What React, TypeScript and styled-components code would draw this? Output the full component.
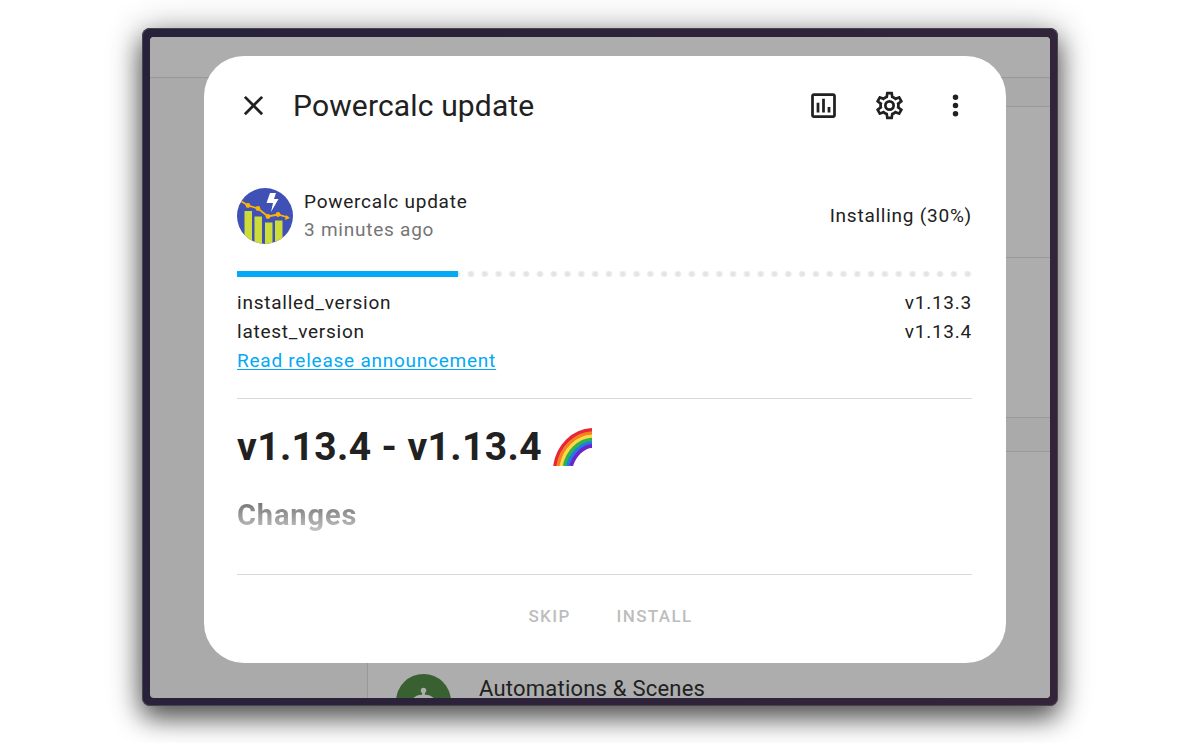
import React from "react";
import styled, { createGlobalStyle } from "styled-components";

const GlobalStyle = createGlobalStyle`
  * { box-sizing: border-box; }
  body { margin: 0; background: #fff; color: #212121; font-family: Roboto, "Liberation Sans", sans-serif; }
  h1, h2, h3, p, dl, dd { margin: 0; }
`;

const Page = styled.main`
  min-height: 100vh;
  padding: 28px 16px 37px;
  overflow: hidden;
`;

const Tablet = styled.div`
  position: relative;
  max-width: 916px;
  margin: 0 auto;
  padding: 9px 8px 8px;
  border-radius: 8px;
  background: linear-gradient(100deg, #27213a, #33243a);
  box-shadow: inset 0 0 0 1px #4a4450, 0 2px 36px rgba(0, 0, 0, 0.3), 0 12px 26px rgba(0, 0, 0, 0.6);
`;

const Screen = styled.div`
  position: relative;
  border-radius: 4px;
  overflow: hidden;
  padding: 19px 44px 35px 54px;
`;

const Backdrop = styled.div`
  position: absolute;
  inset: 0;
  background: #aaa;
`;

const Bar = styled.div`
  height: 41px;
  border-bottom: 1px solid #979797;
  background: #adadad;
`;

const Columns = styled.div`
  display: grid;
  grid-template-columns: 218px 1fr;
`;

const Sidebar = styled.div`
  border-right: 1px solid #999;
`;

const Cards = styled.div`
  display: flex;
  flex-direction: column;
  padding-top: 28px;
`;

const Card = styled.div<{ $height: number; $joined?: boolean }>`
  height: ${(p) => p.$height}px;
  margin-bottom: ${(p) => (p.$joined ? 0 : 33)}px;
  border-top: 1px solid #999;
  border-bottom: ${(p) => (p.$joined ? "0" : "1px solid #999")};
  background: #adadad;
`;

const CardRow = styled.div`
  display: flex;
  gap: 28px;
  padding: 222px 0 0 28px;
`;

const Badge = styled.span`
  display: flex;
  justify-content: center;
  width: 55px;
  height: 55px;
  padding-top: 11px;
  border-radius: 50%;
  background: #386030;
`;

const CardTitle = styled.span`
  padding-top: 6px;
  font-size: 22px;
  line-height: 18px;
  letter-spacing: 0.01em;
`;

const Dialog = styled.section`
  position: relative;
  border-radius: 40px;
  background: #fff;
`;

const Header = styled.header`
  display: flex;
  align-items: center;
  height: 99px;
  padding: 0 34px 0 33px;
`;

const Title = styled.h1`
  flex: 1;
  padding-left: 23px;
  font-size: 30px;
  line-height: 40px;
  font-weight: 400;
  letter-spacing: 0.005em;
`;

const IconButton = styled.button`
  display: flex;
  padding: 0;
  border: 0;
  background: none;
  color: inherit;
`;

const Actions = styled.div`
  display: flex;
  gap: 33px;
`;

const Body = styled.div`
  padding: 33px 34px 0 33px;
  font-size: 19px;
  line-height: 28px;
  letter-spacing: 0.04em;
`;

const State = styled.div`
  display: flex;
  align-items: center;
  gap: 11px;
  height: 56px;
`;

const Name = styled.div`
  flex: 1;
`;

const Muted = styled.p`
  color: #757575;
`;

const Track = styled.div`
  display: flex;
  height: 6px;
  margin: 27px 0 11px;
`;

const Fill = styled.div`
  background: #03a9f4;
`;

const Dots = styled.div`
  flex: 1;
  padding-right: 3px;
  background: radial-gradient(circle at 7px 3px, #e4e4e4 2px, transparent 4px) 6px 0 / 14px 6px round;
  background-origin: content-box;
  background-clip: border-box;
`;

const Fact = styled.div`
  display: flex;
  justify-content: space-between;
  line-height: 29px;
`;

const Link = styled.a`
  display: block;
  color: #03a9f4;
  line-height: 29px;
  text-underline-offset: 2px;
`;

const Notes = styled.article`
  height: 177px;
  margin-top: 23px;
  padding-top: 22px;
  border-top: 1px solid #dadada;
  border-bottom: 1px solid #dadada;
  letter-spacing: 0.02em;
`;

const Release = styled.h2`
  display: flex;
  align-items: center;
  gap: 11px;
  font-size: 39px;
  line-height: 52px;
`;

const Changes = styled.h3`
  margin-top: 22px;
  font-size: 29px;
  line-height: 40px;
  letter-spacing: 0.03em;
  background: linear-gradient(#777 20%, #c4c4c4 90%);
  background-clip: text;
  color: transparent;
`;

const Footer = styled.footer`
  display: flex;
  justify-content: center;
  gap: 46px;
  padding: 29px 0 35px 11px;
`;

const TextButton = styled.button`
  padding: 0;
  border: 0;
  background: none;
  color: #bdbdbd;
  font: 500 17px/24px Roboto, "Liberation Sans", sans-serif;
  letter-spacing: 0.08em;
`;

const icons = {
  close: "M19,6.41L17.59,5L12,10.59L6.41,5L5,6.41L10.59,12L5,17.59L6.41,19L12,13.41L17.59,19L19,17.59L13.41,12L19,6.41Z",
  chart:
    "M9 17H7V10H9V17M13 17H11V7H13V17M17 17H15V13H17V17M19 19H5V5H19V19.1M19 3H5C3.9 3 3 3.9 3 5V19C3 20.1 3.9 21 5 21H19C20.1 21 21 20.1 21 19V5C21 3.9 20.1 3 19 3Z",
  cog: "M12,8A4,4 0 0,1 16,12A4,4 0 0,1 12,16A4,4 0 0,1 8,12A4,4 0 0,1 12,8M12,10A2,2 0 0,0 10,12A2,2 0 0,0 12,14A2,2 0 0,0 14,12A2,2 0 0,0 12,10M10,22C9.75,22 9.54,21.82 9.5,21.58L9.13,18.93C8.5,18.68 7.96,18.34 7.44,17.94L4.95,18.95C4.73,19.03 4.46,18.95 4.34,18.73L2.34,15.27C2.21,15.05 2.27,14.78 2.46,14.63L4.57,12.97L4.5,12L4.57,11L2.46,9.37C2.27,9.22 2.21,8.95 2.34,8.73L4.34,5.27C4.46,5.05 4.73,4.96 4.95,5.05L7.44,6.05C7.96,5.66 8.5,5.32 9.13,5.07L9.5,2.42C9.54,2.18 9.75,2 10,2H14C14.25,2 14.46,2.18 14.5,2.42L14.87,5.07C15.5,5.32 16.04,5.66 16.56,6.05L19.05,5.05C19.27,4.96 19.54,5.05 19.66,5.27L21.66,8.73C21.79,8.95 21.73,9.22 21.54,9.37L19.43,11L19.5,12L19.43,13L21.54,14.63C21.73,14.78 21.79,15.05 21.66,15.27L19.66,18.73C19.54,18.95 19.27,19.04 19.05,18.95L16.56,17.95C16.04,18.34 15.5,18.68 14.87,18.93L14.5,21.58C14.46,21.82 14.25,22 14,22H10M11.25,4L10.88,6.61C9.68,6.86 8.62,7.5 7.85,8.39L5.44,7.35L4.69,8.65L6.8,10.2C6.4,11.37 6.4,12.64 6.8,13.8L4.68,15.36L5.43,16.66L7.86,15.62C8.63,16.5 9.68,17.14 10.87,17.38L11.24,20H12.76L13.13,17.39C14.32,17.14 15.37,16.5 16.14,15.62L18.57,16.66L19.32,15.36L17.2,13.81C17.6,12.64 17.6,11.37 17.2,10.2L19.31,8.65L18.56,7.35L16.15,8.39C15.38,7.5 14.32,6.86 13.12,6.62L12.75,4H11.25Z",
  dots: "M12,16A2,2 0 0,1 14,18A2,2 0 0,1 12,20A2,2 0 0,1 10,18A2,2 0 0,1 12,16M12,10A2,2 0 0,1 14,12A2,2 0 0,1 12,14A2,2 0 0,1 10,12A2,2 0 0,1 12,10M12,4A2,2 0 0,1 14,6A2,2 0 0,1 12,8A2,2 0 0,1 10,6A2,2 0 0,1 12,4Z",
  robot:
    "M12,2A2,2 0 0,1 14,4C14,4.74 13.6,5.39 13,5.73V7H14A7,7 0 0,1 21,14H22A1,1 0 0,1 23,15V18A1,1 0 0,1 22,19H21V20A2,2 0 0,1 19,22H5A2,2 0 0,1 3,20V19H2A1,1 0 0,1 1,18V15A1,1 0 0,1 2,14H3A7,7 0 0,1 10,7H11V5.73C10.4,5.39 10,4.74 10,4A2,2 0 0,1 12,2Z",
};

const Icon = ({ name, fill = "currentColor" }: { name: keyof typeof icons; fill?: string }) => (
  <svg width="33" height="33" viewBox="0 0 24 24" fill={fill} aria-hidden="true">
    <path d={icons[name]} />
  </svg>
);

const PowercalcLogo = () => (
  <svg width="56" height="56" viewBox="0 0 56 56" aria-hidden="true">
    <defs>
      <clipPath id="disc">
        <circle cx="28" cy="28" r="28" />
      </clipPath>
    </defs>
    <g clipPath="url(#disc)">
      <rect width="56" height="56" fill="#3f51b5" />
      <path d="M7.500 23h7.500v33H7.500zM17.500 28.500H25V56H17.500zM28 34.500h7.500V56H28zM38 32.500h7.500V56H38z" fill="#cddc39" />
      <path d="M3 12.500L11 17.500L21 20.500L31 28.500L41 26.500L51 29.500" fill="none" stroke="#ffb300" strokeWidth="1.800" />
      <g fill="#ffb300">
        <circle cx="11" cy="17.500" r="2.400" />
        <circle cx="21" cy="20.500" r="2.400" />
        <circle cx="31" cy="28.500" r="2.400" />
        <circle cx="41" cy="26.500" r="2.400" />
        <path d="M49 27l4 3-5 2z" />
      </g>
      <path d="M33 5h6l-2 6h4.500L34 24l2-9h-6.500z" fill="#fff" />
    </g>
  </svg>
);

const bands = ["#e8263a", "#f5821f", "#ffd84a", "#2fb344", "#1f7be8", "#6a26c9"];

const Rainbow = () => (
  <svg width="39" height="38" viewBox="0 0 39 38" role="img" aria-label="rainbow">
    {bands.map((color, i) => (
      <path
        key={color}
        d={`M${2 + i * 3.2} 38C${5 + i * 3.2} ${18 + i * 2} ${20 + i * 2} ${3 + i * 3} 39 ${2 + i * 3.2}`}
        fill="none"
        stroke={color}
        strokeWidth="3.800"
      />
    ))}
  </svg>
);

const facts = [
  ["installed_version", "v1.13.3"],
  ["latest_version", "v1.13.4"],
];

const progress = 30;

export default function App() {
  return (
    <Page>
      <GlobalStyle />
      <Tablet>
        <Screen>
          <Backdrop>
            <Bar />
            <Columns>
              <Sidebar />
              <Cards>
                <Card $height={151} $joined />
                <Card $height={161} />
                <Card $height={300}>
                  <CardRow>
                    <Badge>
                      <Icon name="robot" fill="#adadad" />
                    </Badge>
                    <CardTitle>Automations &amp; Scenes</CardTitle>
                  </CardRow>
                </Card>
              </Cards>
            </Columns>
          </Backdrop>
          <Dialog role="dialog" aria-labelledby="dialog-title">
            <Header>
              <IconButton aria-label="Close">
                <Icon name="close" />
              </IconButton>
              <Title id="dialog-title">Powercalc update</Title>
              <Actions>
                <IconButton aria-label="History">
                  <Icon name="chart" />
                </IconButton>
                <IconButton aria-label="Settings">
                  <Icon name="cog" />
                </IconButton>
                <IconButton aria-label="More">
                  <Icon name="dots" />
                </IconButton>
              </Actions>
            </Header>
            <Body>
              <State>
                <PowercalcLogo />
                <Name>
                  <p>Powercalc update</p>
                  <Muted>3 minutes ago</Muted>
                </Name>
                <p>Installing ({progress}%)</p>
              </State>
              <Track role="progressbar" aria-valuenow={progress} aria-label="Install progress">
                <Fill style={{ width: `${progress}%` }} />
                <Dots />
              </Track>
              <dl>
                {facts.map(([label, value]) => (
                  <Fact key={label}>
                    <dt>{label}</dt>
                    <dd>{value}</dd>
                  </Fact>
                ))}
              </dl>
              <Link href="#release">Read release announcement</Link>
              <Notes>
                <Release id="release">
                  v1.13.4 - v1.13.4
                  <Rainbow />
                </Release>
                <Changes>Changes</Changes>
              </Notes>
            </Body>
            <Footer>
              <TextButton>SKIP</TextButton>
              <TextButton>INSTALL</TextButton>
            </Footer>
          </Dialog>
        </Screen>
      </Tablet>
    </Page>
  );
}
